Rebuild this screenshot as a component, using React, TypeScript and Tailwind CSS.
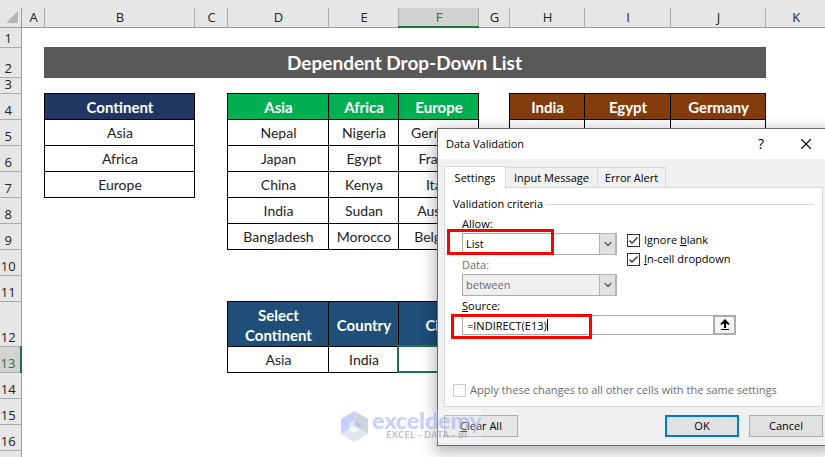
import { useState } from "react";
import clsx from "clsx";
import { ChevronDown, X } from "lucide-react";

const columns = [
  { name: "A", width: "w-[23px]" },
  { name: "B", width: "w-[150px]" },
  { name: "C", width: "w-[33px]" },
  { name: "D", width: "w-[101px]" },
  { name: "E", width: "w-[70px]" },
  { name: "F", width: "w-[80px]" },
  { name: "G", width: "w-[31px]" },
  { name: "H", width: "w-[75px]" },
  { name: "I", width: "w-[86px]" },
  { name: "J", width: "w-[95px]" },
  { name: "K", width: "w-auto" },
];

const rowHeights = [20, 30, 16, 26, 26, 26, 26, 26, 26, 26, 26, 45, 26, 26, 26, 26];

const heights: Record<number, string> = {
  16: "h-4",
  20: "h-5",
  26: "h-[26px]",
  30: "h-[30px]",
  45: "h-[45px]",
};

type Kind = "navy" | "green" | "brown" | "blue" | "plain";

const kinds: Record<Kind, string> = {
  navy: "bg-[#203764] text-[15px] font-bold text-white",
  green: "bg-[#00b050] text-[15px] font-bold text-white",
  brown: "bg-[#843c0c] text-[15px] font-bold text-white",
  blue: "bg-[#1f4e78] text-[15px] font-bold text-white",
  plain: "bg-white text-sm text-[#222]",
};

const cells: Record<string, { text: string; kind: Kind }> = {};

function fill(column: string, start: number, kind: Kind, values: string[]) {
  values.forEach((text, i) => {
    cells[`${column}${start + i}`] = { text, kind: i === 0 ? kind : "plain" };
  });
}

fill("B", 4, "navy", ["Continent", "Asia", "Africa", "Europe"]);
fill("D", 4, "green", ["Asia", "Nepal", "Japan", "China", "India", "Bangladesh"]);
fill("E", 4, "green", ["Africa", "Nigeria", "Egypt", "Kenya", "Sudan", "Morocco"]);
fill("F", 4, "green", ["Europe", "Germany", "France", "Italy", "Austria", "Belgium"]);
fill("H", 4, "brown", ["India", "Delhi"]);
fill("I", 4, "brown", ["Egypt", ""]);
fill("J", 4, "brown", ["Germany", "Berlin"]);
fill("D", 12, "blue", ["Select Continent", "Asia"]);
fill("E", 12, "blue", ["Country", "India"]);
fill("F", 12, "blue", ["City", ""]);

function Sheet() {
  return (
    <div className="font-[Lato,sans-serif]">
      <div className="h-2 bg-[#e6e6e6]" />
      <table className="w-full table-fixed border-collapse text-center leading-5">
        <colgroup>
          <col className="w-[21px]" />
          {columns.map((c) => (
            <col key={c.name} className={c.width} />
          ))}
        </colgroup>
        <thead>
          <tr className="h-[19px] font-['Open_Sans',sans-serif] text-[13px]">
            <th className="border-r border-b border-[#9b9b9b] bg-[#e6e6e6] p-0">
              <svg viewBox="0 0 12 12" className="ml-auto mr-[3px] h-3 w-3" fill="#b4b4b4">
                <path d="M12 0V12H0Z" />
              </svg>
            </th>
            {columns.map((c) => (
              <th
                key={c.name}
                className={clsx(
                  "border-r p-0 pl-0.5 font-normal leading-4 last:border-r-0",
                  c.name === "F"
                    ? "border-b-2 border-r-[#ababab] border-b-[#217346] bg-[#d2d2d2] text-[#217346]"
                    : "border-b border-r-[#ababab] border-b-[#9b9b9b] bg-[#e6e6e6] text-[#222]"
                )}
              >
                {c.name}
              </th>
            ))}
          </tr>
        </thead>
        <tbody>
          {rowHeights.map((height, i) => {
            const row = i + 1;
            return (
              <tr key={row} className={heights[height]}>
                <th
                  className={clsx(
                    "border-b p-0 align-bottom font-['Open_Sans',sans-serif] text-[13px] font-normal leading-4",
                    row === 13
                      ? "border-r-2 border-r-[#217346] border-b-[#ababab] bg-[#d2d2d2] text-[#217346]"
                      : "border-r border-r-[#9b9b9b] border-b-[#ababab] bg-[#e6e6e6] text-[#222]"
                  )}
                >
                  <div className="-mt-1 pb-px pr-1">{row}</div>
                </th>
                {row === 2 ? (
                  <>
                    <td />
                    <td
                      colSpan={9}
                      className="border border-[#595959] bg-[#595959] p-0 pt-0.5 text-[19px] font-bold leading-6 text-white"
                    >
                      Dependent Drop-Down List
                    </td>
                    <td />
                  </>
                ) : (
                  columns.map((c) => {
                    const cell = cells[`${c.name}${row}`];
                    if (!cell) return <td key={c.name} className="p-0" />;
                    return (
                      <td
                        key={c.name}
                        className={clsx(
                          "border border-black p-0 pt-0.5 pl-0.5",
                          kinds[cell.kind],
                          c.name === "F" && row === 13 && "outline-2 -outline-offset-1 outline-[#217346]"
                        )}
                      >
                        {cell.text}
                      </td>
                    );
                  })
                )}
              </tr>
            );
          })}
          <tr className="h-[26px]">
            <th className="border-r border-[#9b9b9b] bg-[#e6e6e6]" />
            <td colSpan={11} />
          </tr>
        </tbody>
      </table>
    </div>
  );
}

function Check({ id, label, checked, disabled }: { id: string; label: React.ReactNode; checked?: boolean; disabled?: boolean }) {
  const [on, setOn] = useState(!!checked);
  return (
    <div className="flex items-center gap-1">
      <span className="relative flex h-[13px] w-[13px]">
        <input
          id={id}
          type="checkbox"
          checked={on}
          disabled={disabled}
          onChange={(e) => setOn(e.target.checked)}
          className="h-[13px] w-[13px] appearance-none border border-[#333] bg-white disabled:border-[#ccc]"
        />
        {on && (
          <svg viewBox="0 0 13 13" className="pointer-events-none absolute inset-0" fill="none" stroke="#333" strokeWidth="1.3">
            <path d="M2.5 6.5L5 9L10.5 3.5" />
          </svg>
        )}
      </span>
      <label htmlFor={id} className={clsx("whitespace-nowrap", disabled && "text-[#6d6d6d]")}>
        {label}
      </label>
    </div>
  );
}

function Dropdown({ id, value, disabled }: { id: string; value: string; disabled?: boolean }) {
  return (
    <div className="relative w-[155px]">
      <select
        id={id}
        disabled={disabled}
        defaultValue={value}
        className="block h-[22px] w-full appearance-none border border-[#ababab] bg-white px-[3px] opacity-100 disabled:bg-[#f0f0f0] disabled:text-[#6d6d6d]"
      >
        <option>{value}</option>
      </select>
      <span className="pointer-events-none absolute inset-y-0 right-0 flex w-[18px] items-center justify-center border border-r-2 border-[#b4b4b4] bg-[#e1e1e1]">
        <ChevronDown className="h-3 w-3 shrink-0 text-[#555]" strokeWidth={2.5} />
      </span>
    </div>
  );
}

function DataValidationDialog() {
  return (
    <div
      role="dialog"
      aria-label="Data Validation"
      className="absolute left-[437px] top-32 w-[393px] border border-[#6b6b6b] bg-[#f0f0f0] font-['Open_Sans',sans-serif] text-[11px] leading-4 text-black shadow-[0_4px_14px_2px_rgba(0,0,0,0.3)]"
    >
      <div className="flex h-[30px] items-center bg-white pl-2 pr-[18px]">
        <h1 className="grow">Data Validation</h1>
        <button type="button" aria-label="Help" className="mr-[30px] w-3 text-center text-sm">
          ?
        </button>
        <button type="button" aria-label="Close">
          <X className="-mr-1 h-[18px] w-[18px]" strokeWidth={1.5} />
        </button>
      </div>

      <div className="px-[6px] pt-[7px]">
        <div className="flex items-end" role="tablist">
          <button type="button" role="tab" aria-selected="true" className="relative z-10 -mb-px h-[22px] w-[62px] border border-b-0 border-[#d9d9d9] bg-white">
            Settings
          </button>
          <button type="button" role="tab" className="h-5 w-[92px] border border-b-0 border-l-0 border-[#d9d9d9]">
            Input Message
          </button>
          <button type="button" role="tab" className="h-5 w-[68px] border border-b-0 border-l-0 border-[#d9d9d9]">
            Error Alert
          </button>
        </div>

        <div className="h-[220px] border border-[#d9d9d9] bg-white px-2 pt-2">
          <div className="flex items-center gap-1">
            <h2>Validation criteria</h2>
            <span className="h-px grow bg-[#d9d9d9]" />
          </div>

          <div className="mt-[5px] flex gap-[10px] pl-[9px]">
            <div>
              <label htmlFor="allow" className="block pb-0.5 leading-[14px]">
                <u>A</u>llow:
              </label>
              <div className="relative">
                <Dropdown id="allow" value="List" />
                <span className="pointer-events-none absolute -left-[15px] -top-1 h-[26px] w-[107px] border-3 border-[#fe0000]" />
              </div>
              <label htmlFor="data" className="mt-[3px] block pb-0.5 leading-[14px] text-[#6d6d6d]">
                Data:
              </label>
              <Dropdown id="data" value="between" disabled />
            </div>
            <div className="space-y-[3px] pt-[15px]">
              <Check id="blank" checked label={<>Ignore <u>b</u>lank</>} />
              <Check id="incell" checked label={<><u>I</u>n-cell dropdown</>} />
            </div>
          </div>

          <div className="mt-[3px] pl-[9px]">
            <label htmlFor="source" className="block pb-0.5 leading-[14px]">
              <u>S</u>ource:
            </label>
            <div className="relative flex w-[274px]">
              <input
                id="source"
                defaultValue="=INDIRECT(E13)"
                className="h-5 w-0 grow border border-[#ababab] bg-white px-1 outline-none"
              />
              <button
                type="button"
                aria-label="Collapse dialog"
                className="flex h-5 w-[22px] items-center justify-center border-2 border-l-1 border-[#ababab] bg-[#f4f4f4]"
              >
                <svg viewBox="0 0 10 12" className="h-3 w-[10px]">
                  <path d="M5 0L9.3 4.5V6L6 4.5V9H4V4.5L0.7 6V4.5Z" />
                  <path d="M1 10H9V11H1Z" />
                </svg>
              </button>
              <span className="absolute left-[85px] top-1 h-3 w-px bg-black" />
              <span className="pointer-events-none absolute -left-[11px] -top-px h-[25px] w-[141px] border-3 border-[#fe0000]" />
            </div>
          </div>

          <div className="mt-[47px]">
            <Check id="apply" disabled label="Apply these changes to all other cells with the same settings" />
          </div>
        </div>

        <div className="flex gap-[10px] py-2">
          <button type="button" className="mr-auto h-[22px] w-[74px] border border-[#adadad] bg-[#e6e6e6]">
            <u>C</u>lear All
          </button>
          <button type="button" className="h-[22px] w-[74px] border-2 border-[#0078d7] bg-[#e1e1e1]">
            OK
          </button>
          <button type="button" className="h-[22px] w-[74px] border border-[#adadad] bg-[#e1e1e1]">
            Cancel
          </button>
        </div>
      </div>
    </div>
  );
}

function Watermark() {
  return (
    <div className="pointer-events-none absolute left-[341px] top-[410px] flex items-center gap-1 bg-white/20 font-[Lato,sans-serif]">
      <svg viewBox="0 0 27 31" className="h-[31px] w-[27px]">
        <path d="M13.5 0L0 8V23L8 18V12L13.5 9Z" fill="#c3d0fb" />
        <path d="M13.5 0L27 8V23L19 18V12L13.5 9Z" fill="#cfd4da" />
        <path d="M0 23L13.5 31L27 23L19 18L13.5 21.5L8 18Z" fill="#dfe8f0" />
        <path d="M8 12L13.5 9V15L8 18Z" fill="#dce5fc" />
        <path d="M13.5 9L19 12V18L13.5 15Z" fill="#b9c6ee" />
        <path d="M13.5 15L19 18L13.5 21.5L8 18Z" fill="#f4f7ff" />
      </svg>
      <div className="pb-0.5 text-center">
        <div className="text-[23px] font-black leading-5 text-[#8ea5f5]/50">exceldemy</div>
        <div className="text-[9px] font-bold leading-[10px] tracking-wider text-[#8b93a0]/60">EXCEL - DATA - BI</div>
      </div>
    </div>
  );
}

export default function App() {
  return (
    <main className="relative h-screen overflow-hidden bg-white">
      <Sheet />
      <DataValidationDialog />
      <Watermark />
    </main>
  );
}
